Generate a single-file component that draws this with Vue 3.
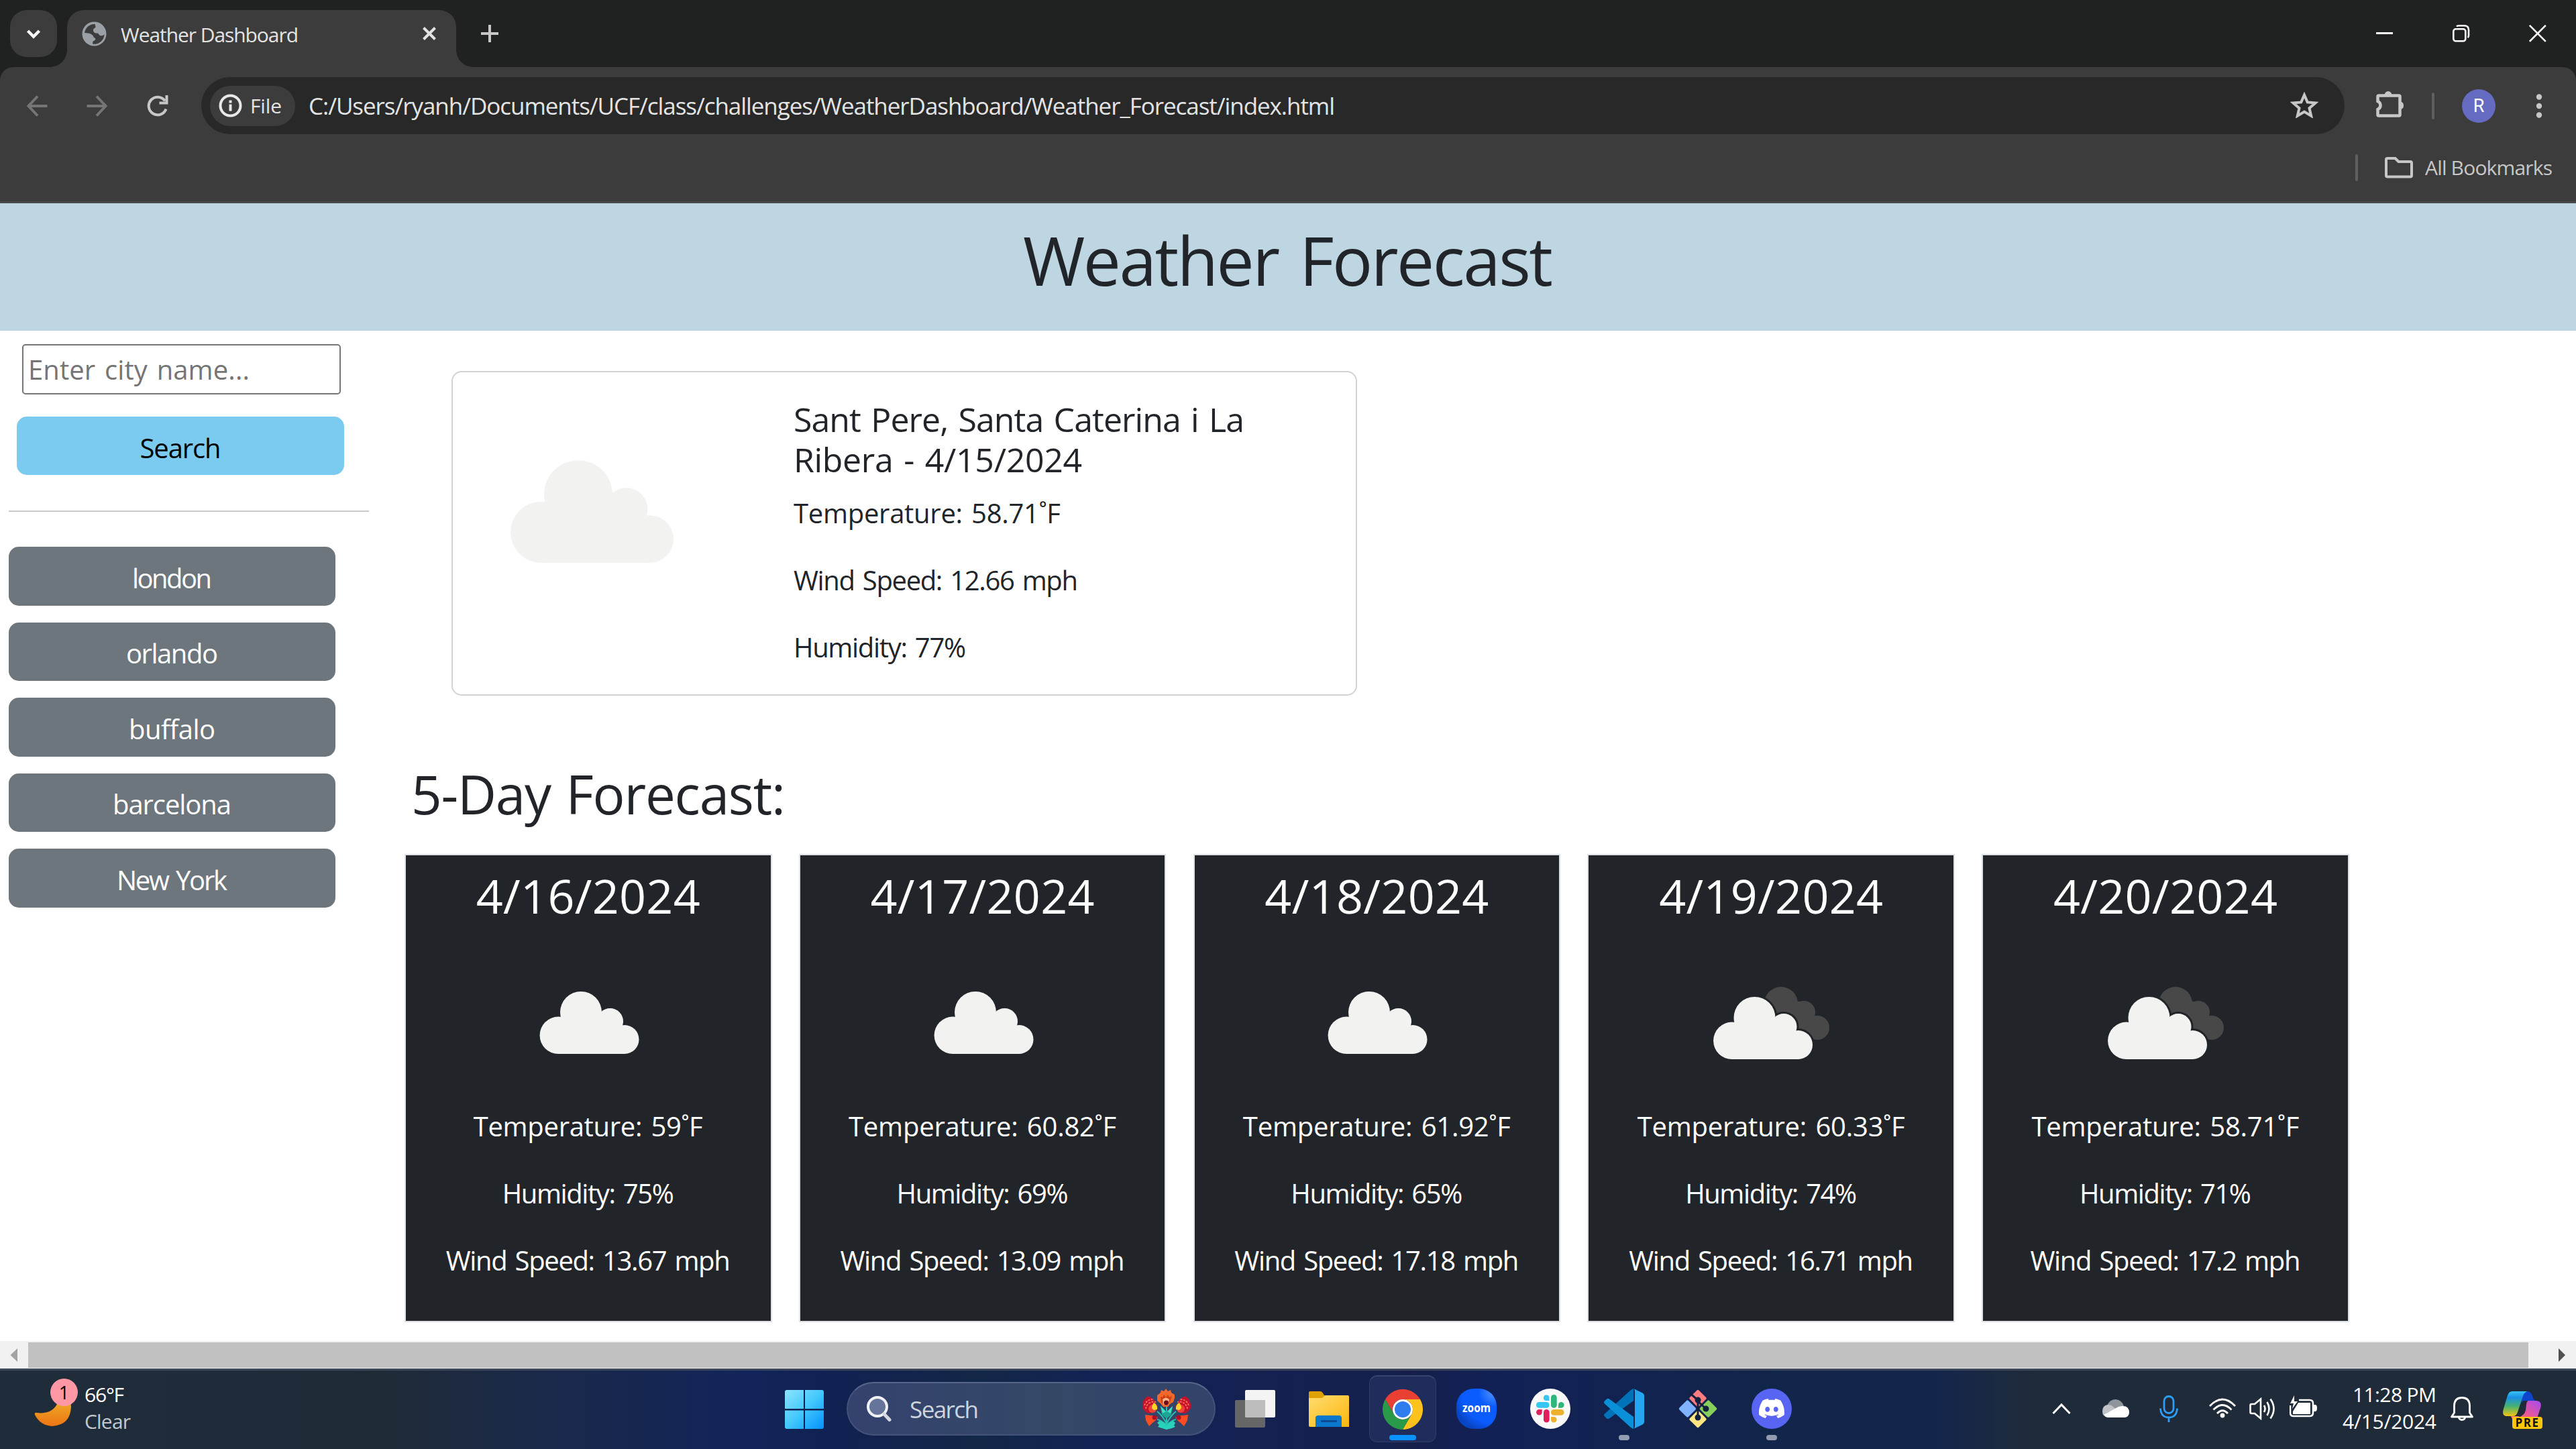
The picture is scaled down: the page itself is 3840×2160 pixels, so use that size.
<script setup>
const cities = [
  { name: 'london', w: 119 },
  { name: 'orlando', w: 137 },
  { name: 'buffalo', w: 129 },
  { name: 'barcelona', w: 177 },
  { name: 'New York', w: 165 },
]

const days = [
  { date: '4/16/2024', temp: 'Temperature: 59˚F', tw: 342, hum: 'Humidity: 75%', wind: 'Wind Speed: 13.67 mph', ww: 424 },
  { date: '4/17/2024', temp: 'Temperature: 60.82˚F', tw: 399, hum: 'Humidity: 69%', wind: 'Wind Speed: 13.09 mph', ww: 424 },
  { date: '4/18/2024', temp: 'Temperature: 61.92˚F', tw: 399, hum: 'Humidity: 65%', wind: 'Wind Speed: 17.18 mph', ww: 424 },
  { date: '4/19/2024', temp: 'Temperature: 60.33˚F', tw: 399, hum: 'Humidity: 74%', wind: 'Wind Speed: 16.71 mph', ww: 424, broken: true },
  { date: '4/20/2024', temp: 'Temperature: 58.71˚F', tw: 399, hum: 'Humidity: 71%', wind: 'Wind Speed: 17.2 mph', ww: 403, broken: true },
]

// Tracks a line of text so that it spans the given width in pixels.
const vFit = {
  mounted(el, { value }) {
    const gaps = el.textContent.trim().length - 1
    const spacing = (value - el.getBoundingClientRect().width) / gaps
    el.style.letterSpacing = `${spacing}px`
    el.style.marginRight = `${-spacing}px`
  },
}
</script>

<template>
  <div class="screen">
    <!-- Browser chrome -->
    <div class="tabstrip">
      <div class="tab-search">
        <svg width="70" height="70" viewBox="0 0 70 70"><path d="M26.500 31l8.500 8.500 8.500-8.500" fill="none" stroke="#fff" stroke-width="4.500" /></svg>
      </div>
      <div class="tab">
        <svg class="globe" width="37" height="37" viewBox="0 0 37 37">
          <circle cx="18.500" cy="18.500" r="18" fill="#9aa0a6" />
          <path d="M20 4C12 3 5 9 4 17c5 0 9 .5 12 3.500 1.500 1.500 1 3 3 4 2.500 1 1 4-1.500 4.500-1.500.3-1 2.500-1.500 4.500 9 1.500 17-5 17.500-14-3 2-5 2.500-7 1-2-1.700-1.500-3-4-3-4 0-5.500-2-5.500-5 0-2.500 3-2 3.500-4.500.3-1.500-1.500-2-.5-4z" fill="#3c3c3c" />
        </svg>
        <span v-fit="265" class="t tab-title">Weather Dashboard</span>
        <svg class="tab-x" width="20" height="20" viewBox="0 0 20 20"><path d="M1.500 1.500l17 17M18.500 1.500l-17 17" stroke="#e3e3e3" stroke-width="4" /></svg>
      </div>
      <svg class="plus" width="26" height="26" viewBox="0 0 26 26"><path d="M13 0v26M0 13h26" stroke="#c7c7c7" stroke-width="4" /></svg>
      <div class="winctl">
        <svg width="26" height="26" viewBox="0 0 26 26"><path d="M0 12.500h25" stroke="#fff" stroke-width="3" /></svg>
        <svg width="26" height="26" viewBox="0 0 26 26" fill="none" stroke="#fff" stroke-width="2.600"><rect x="1.300" y="6.300" width="18" height="18" rx="3.500" /><path d="M6 2.500q1-1.200 3-1.200h8.500q6.500 0 6.500 6.500V16q0 2-1.500 3" /></svg>
        <svg width="26" height="26" viewBox="0 0 26 26"><path d="M.8.800l24 24M24.800.800l-24 24" stroke="#fff" stroke-width="2.600" /></svg>
      </div>
    </div>

    <div class="toolbar">
      <div class="navrow">
        <svg class="back" width="31" height="32" viewBox="0 0 31 32" fill="none" stroke="#757575" stroke-width="4"><path d="M30.500 16H3M16 1.500L2.500 16 16 30.500" /></svg>
        <svg class="fwd" width="31" height="32" viewBox="0 0 31 32" fill="none" stroke="#757575" stroke-width="4"><path d="M.5 16H28M15 1.500L28.500 16 15 30.500" /></svg>
        <svg class="reload" width="32" height="32" viewBox="0 0 32 32" fill="none" stroke="#c7c7c7" stroke-width="4"><path d="M28.500 20.500A13.300 13.300 0 1 1 27 8.500" /><path d="M29.500 0v11.500H18.500" /></svg>
        <div class="omnibox">
          <div class="chip">
            <svg width="35" height="35" viewBox="0 0 35 35"><circle cx="17.500" cy="17.500" r="15" fill="none" stroke="#e8e8e8" stroke-width="4" /><path d="M17.500 15.500v10M17.500 9.500v4" stroke="#e8e8e8" stroke-width="4" /></svg>
            <span v-fit="47" class="t chip-text">File</span>
          </div>
          <span v-fit="1530" class="t url">C:/Users/ryanh/Documents/UCF/class/challenges/WeatherDashboard/Weather_Forecast/index.html</span>
          <svg class="star" width="42" height="40" viewBox="0 0 42 40"><path d="M21 5.500l4.700 10.900 11.800 1-9 7.800 2.700 11.500L21 30.500l-10.200 6.200 2.700-11.500-9-7.800 11.800-1z" fill="none" stroke="#c7c7c7" stroke-width="4" /></svg>
        </div>
        <svg class="puzzle" width="43" height="42" viewBox="0 0 43 42"><path d="M5 8.500h29a1.500 1.500 0 0 1 1.500 1.500v27a1.500 1.500 0 0 1-1.500 1.500H4A1.500 1.500 0 0 1 2.500 37v-8a6.500 6.500 0 0 0 0-12V10A1.500 1.500 0 0 1 4 8.500z" fill="none" stroke="#c7c7c7" stroke-width="4.500" /><path d="M12.500 8a5.500 6 0 0 1 11 0zM36 17.500a5.800 5.800 0 0 1 0 11.500z" fill="#c7c7c7" /></svg>
        <div class="sep" />
        <div class="avatar">R</div>
        <svg class="kebab" width="10" height="44" viewBox="0 0 10 44" fill="#c7c7c7"><circle cx="5" cy="8.500" r="4.200" /><circle cx="5" cy="22" r="4.200" /><circle cx="5" cy="35.500" r="4.200" /></svg>
      </div>
      <div class="bookmarks">
        <div class="sep" />
        <svg width="42" height="32" viewBox="0 0 42 32"><path d="M4 2h11.500l5 5H38q2 0 2 2v18.500q0 2-2 2H4q-2 0-2-2V4q0-2 2-2z" fill="none" stroke="#c7c7c7" stroke-width="4" /></svg>
        <span v-fit="190" class="t">All Bookmarks</span>
      </div>
    </div>

    <!-- Weather page -->
    <header><h1 v-fit="790">Weather Forecast</h1></header>
    <div class="page">
      <aside>
        <div class="field"><span v-fit="330">Enter city name...</span></div>
        <button class="search-btn"><span v-fit="121">Search</span></button>
        <div class="rule" />
        <div class="history">
          <button v-for="c in cities" :key="c.name"><span v-fit="c.w">{{ c.name }}</span></button>
        </div>
      </aside>
      <main>
        <section class="current">
          <svg width="243" height="153" viewBox="0 0 148 93" fill="#f2f2f1">
            <circle cx="61.500" cy="31" r="31" /><circle cx="27.800" cy="65.300" r="27.700" /><circle cx="105" cy="44.500" r="19.500" /><circle cx="126.500" cy="71.500" r="21.500" /><path d="M28 60l2-22h74l14 16 9 39H28z" />
          </svg>
          <div class="facts">
            <h5><span v-fit="672">Sant Pere, Santa Caterina i La</span><span v-fit="430">Ribera - 4/15/2024</span></h5>
            <p><span v-fit="398">Temperature: 58.71˚F</span></p>
            <p><span v-fit="424">Wind Speed: 12.66 mph</span></p>
            <p><span v-fit="257">Humidity: 77%</span></p>
          </div>
        </section>
        <h2><span v-fit="558">5-Day Forecast:</span></h2>
        <section class="days">
          <article v-for="d in days" :key="d.date">
            <h3><span v-fit="334">{{ d.date }}</span></h3>
            <svg width="250" height="270" viewBox="0 0 250 270">
              <g v-if="d.broken" fill="#484849">
                <circle cx="140" cy="119" r="25" /><circle cx="174" cy="132" r="17" /><circle cx="194" cy="155" r="18" /><path d="M134 110l45 8 12 54h-40z" />
              </g>
              <g v-if="d.broken" transform="translate(39 109)" fill="#212529" stroke="#212529" stroke-width="6">
                <circle cx="61.500" cy="31" r="31" /><circle cx="105" cy="44.500" r="19.500" /><circle cx="126.500" cy="71.500" r="21.500" />
              </g>
              <g :transform="d.broken ? 'translate(39 109)' : 'translate(52.500 101)'" fill="#f2f2f1">
                <circle cx="61.500" cy="31" r="31" /><circle cx="27.800" cy="65.300" r="27.700" /><circle cx="105" cy="44.500" r="19.500" /><circle cx="126.500" cy="71.500" r="21.500" /><path d="M28 60l2-22h74l14 16 9 39H28z" />
              </g>
            </svg>
            <p><span v-fit="d.tw">{{ d.temp }}</span></p>
            <p><span v-fit="256">{{ d.hum }}</span></p>
            <p><span v-fit="d.ww">{{ d.wind }}</span></p>
          </article>
        </section>
      </main>
    </div>
    <div class="scrollbar">
      <svg width="42" height="41" viewBox="0 0 42 41"><path d="M26 11v20L15.500 21z" fill="#a3a3a3" /></svg>
      <div class="thumb" />
      <svg width="71" height="41" viewBox="0 0 71 41"><path d="M45 11v20l10-10z" fill="#505050" /></svg>
    </div>

    <!-- Windows taskbar -->
    <div class="taskbar">
      <div class="widget">
        <svg width="70" height="60" viewBox="0 0 70 60">
          <defs><linearGradient id="moon" x1="0" y1="0" x2="0" y2="1"><stop offset="0" stop-color="#eec22f" /><stop offset="1" stop-color="#ee7414" /></linearGradient></defs>
          <path d="M35 6Q54 12 55 30Q54 57 27 59Q9 58 1 42Q0 38 4 39Q28 42 36 22Z" fill="url(#moon)" />
        </svg>
        <div class="badge">1</div>
        <div class="wtext"><span v-fit="59">66°F</span><span v-fit="69" class="dim">Clear</span></div>
      </div>

      <div class="apps">
        <svg class="start" width="58" height="58" viewBox="0 0 58 58">
          <defs><linearGradient id="win" x1="0" y1="0" x2="1" y2="1"><stop offset="0" stop-color="#8ce4fb" /><stop offset=".5" stop-color="#43c8fd" /><stop offset="1" stop-color="#0491fe" /></linearGradient></defs>
          <path d="M3 0h25v28H0V3q0-3 3-3zM30 0h25q3 0 3 3v25H30zM0 30.500h28V58H3q-3 0-3-3zM30 30.500h28V55q0 3-3 3H30z" fill="url(#win)" />
        </svg>
        <div class="searchbox">
          <svg width="38" height="39" viewBox="0 0 38 39"><circle cx="16" cy="16" r="14" fill="#66739a" stroke="#f0f1f4" stroke-width="4" /><path d="M26 27l8 8.500" stroke="#d5d9df" stroke-width="5" stroke-linecap="round" /></svg>
          <span v-fit="103">Search</span>
          <svg class="flower" width="72" height="63" viewBox="0 0 72 63">
            <path d="M22 11l5-4 1-4 4 2 3-4 3 4 4-2 1 4 5 3 0 5-2 6-5 3-3 4H31l-4-5-5-4z" fill="#f0682c" />
            <path d="M27 13l3 1 2-4 3 4 3-4 2 4 4-2-3 9-4 4h-5l-4-4z" fill="#cf3e0c" />
            <path d="M30 17q5-5 10 0l-1 8h-8z" fill="#ffb28b" /><circle cx="35.500" cy="22" r="3.500" fill="#6d0b18" />
            <path d="M11 13l4 3 3 3 2 5 3 3-3 7-6 3-6 1-4-3-4-5 0-6 2-6 4-5z" fill="#c3122e" />
            <path d="M61 13l-4 3-3 3-2 5-3 3 3 7 6 3 6 1 4-3 4-5 0-6-2-6-4-5z" fill="#c3122e" />
            <path d="M5 31a12 12 0 0 1 15-10M3 26a13 13 0 0 1 14-9M67 31a12 12 0 0 0-15-10M69 26a13 13 0 0 0-14-9" stroke="#fb684e" stroke-width="2" stroke-dasharray="3 1.500" fill="none" />
            <circle cx="15" cy="31" r="6" fill="#ef4435" /><circle cx="57" cy="31" r="6" fill="#ef4435" />
            <path d="M17 22q6 3 5 10l-5 1q-6-3 0-11zM55 22q-6 3-5 10l5 1q6-3 0-11z" fill="#fdd32a" />
            <path d="M4 40l8 1 6 0 5 3-4 5-4 3-5 5-3-5-2-4zM68 40l-8 1-6 0-5 3 4 5 4 3 5 5 3-5 2-4z" fill="#fc4c24" />
            <circle cx="18" cy="44" r="3.500" fill="#a8102b" /><circle cx="54" cy="44" r="3.500" fill="#a8102b" />
            <path d="M36 28v34M36 54Q31 42 22 35M36 54q5-12 14-19M35 55Q28 48 22 47M37 55q7-7 13-8" stroke="#25c3b1" stroke-width="2" fill="none" />
            <path d="M27 27l9 9 9-9-2 13-7 6-7-6z" fill="#1aa692" /><path d="M27 27l8 8-5 3zM45 27l-8 8 5 3z" fill="#41e0c7" />
            <path d="M36 62l-7-2-6-2 2-3-3-3 3-3 8 3 3 5 3-5 7-3 3 3-2 4 2 2-5 2z" fill="#28d2ba" />
          </svg>
        </div>
        <svg class="icon task" width="60" height="60" viewBox="0 0 60 60">
          <rect x="0" y="17" width="45" height="41" rx="2" fill="#666" /><rect x="15" y="2" width="45" height="41" rx="2" fill="#f4f4f4" /><path d="M15 17h30v26H17q-2 0-2-2z" fill="#bdbdbd" />
        </svg>
        <svg class="icon" width="60" height="60" viewBox="0 0 60 60">
          <defs><linearGradient id="fold" x1="0" y1="0" x2="1" y2="1"><stop offset="0" stop-color="#ffdc70" /><stop offset="1" stop-color="#fdb70e" /></linearGradient></defs>
          <path d="M0 6q0-2 2-2h15q2 0 3.500 2l4 6-4 4H0z" fill="#dfa104" /><path d="M0 14h20l4-4h34q2 0 2 2v45H2q-2 0-2-2z" fill="url(#fold)" /><path d="M10 57V44q0-4 4-4h31q4 0 4 4v13z" fill="#0b78cd" /><rect x="18" y="47" width="24" height="3" rx="1" fill="#084b93" />
        </svg>
        <div class="icon active">
          <svg width="60" height="60" viewBox="0 0 60 60">
            <path d="M30 15H56A30 30 0 0 0 4 15L17 37.500A15 15 0 0 1 30 15z" fill="#ea4033" /><path d="M30 15h26a30 30 0 0 1-26 45l13-22.500A15 15 0 0 0 30 15z" fill="#fdc21c" /><path d="M4 15a30 30 0 0 0 26 45l13-22.500a15 15 0 0 1-26 0z" fill="#299a48" /><circle cx="30" cy="30" r="15" fill="#fff" /><circle cx="30" cy="30" r="12" fill="#2f7cee" />
          </svg>
        </div>
        <svg class="icon" width="60" height="60" viewBox="0 0 60 60">
          <defs><radialGradient id="zm" cx=".9" cy=".1" r="1"><stop offset="0" stop-color="#4a90ff" /><stop offset=".35" stop-color="#0b5cff" /><stop offset=".75" stop-color="#0b5cff" /><stop offset="1" stop-color="#0845c4" /></radialGradient></defs>
          <rect width="60" height="60" rx="26" fill="url(#zm)" /><text x="30" y="35" text-anchor="middle" textLength="42" lengthAdjust="spacingAndGlyphs" class="zoom">zoom</text>
        </svg>
        <svg class="icon" width="60" height="60" viewBox="0 0 60 60">
          <circle cx="30" cy="30" r="30" fill="#f8f8f8" />
          <g fill="#36c5f0"><path d="M28.500 18h-4.300a4.300 4.300 0 1 1 4.300-4.500z" /><rect x="9" y="20" width="19.500" height="8.700" rx="4.300" /></g>
          <g fill="#2eb67d"><rect x="31" y="9" width="8.700" height="19.700" rx="4.300" /><path d="M42 28.700v-4.300a4.300 4.300 0 1 1 4.300 4.300z" /></g>
          <g fill="#ecb22e"><rect x="31" y="31" width="19.500" height="8.700" rx="4.300" /><path d="M31 42h4.300a4.300 4.300 0 1 1-4.300 4.300z" /></g>
          <g fill="#e01e5a"><rect x="20" y="31" width="8.700" height="19.500" rx="4.300" /><path d="M17.700 31v4.300a4.300 4.300 0 1 1-4.300-4.300z" /></g>
        </svg>
        <div class="icon running">
          <svg width="60" height="60" viewBox="0 0 60 60">
            <path d="M44 0v18L8 44.500q-2 1.500-4 0l-3-3q-2-2 0-4L40 2z" fill="#0072b8" /><path d="M44 60V42L8 15.500q-2-1.500-4 0l-3 3q-2 2 0 4L40 58z" fill="#0a90d9" /><path d="M44 0l13.500 6.500Q60 8 60 10.500v39q0 2.500-2.500 4L44 60q2-1 2-4V4q0-3-2-4z" fill="#24a6f1" />
          </svg>
        </div>
        <svg class="icon" width="60" height="60" viewBox="0 0 60 60">
          <g transform="rotate(45 30 30)"><rect x="9.500" y="9.500" width="19" height="19" rx="2" fill="#fc7c80" /><rect x="31.500" y="9.500" width="19" height="19" rx="2" fill="#86cf5a" /><rect x="9.500" y="31.500" width="19" height="19" rx="2" fill="#80b3ff" /><rect x="31.500" y="31.500" width="19" height="19" rx="2" fill="#ffe680" /></g>
          <path d="M17 6l13 11v26M30 19l12 11" fill="none" stroke="#12203f" stroke-width="3" /><circle cx="30" cy="17" r="4.500" fill="#12203f" /><circle cx="42" cy="30" r="4.500" fill="#12203f" /><circle cx="30" cy="43" r="4.500" fill="#12203f" />
        </svg>
        <div class="icon running">
          <svg width="60" height="60" viewBox="0 0 60 60"><circle cx="30" cy="30" r="30" fill="#5865f2" /><path transform="translate(11 10.500) scale(1.583)" fill="#fff" d="M20.317 4.370a19.790 19.790 0 00-4.885-1.515.074.074 0 00-.079.037c-.211.375-.445.865-.608 1.250-1.845-.276-3.680-.276-5.487 0-.164-.393-.406-.874-.618-1.250a.077.077 0 00-.079-.037 19.736 19.736 0 00-4.885 1.515.070.070 0 00-.032.028C.533 9.046-.319 13.580.099 18.058a.082.082 0 00.031.056c2.053 1.508 4.041 2.423 5.993 3.029a.078.078 0 00.084-.028c.462-.630.873-1.295 1.226-1.994a.076.076 0 00-.042-.106c-.653-.248-1.274-.550-1.872-.892a.077.077 0 01-.008-.128c.126-.094.252-.192.372-.291a.074.074 0 01.078-.011c3.928 1.793 8.180 1.793 12.061 0a.074.074 0 01.079.010c.120.099.246.198.373.292a.077.077 0 01-.007.128 12.299 12.299 0 01-1.873.891.077.077 0 00-.041.107c.360.698.772 1.363 1.225 1.993a.076.076 0 00.084.029c1.961-.607 3.950-1.522 6.002-3.029a.077.077 0 00.031-.055c.500-5.177-.838-9.674-3.549-13.660a.061.061 0 00-.031-.029zM8.020 15.331c-1.183 0-2.157-1.086-2.157-2.419s.956-2.419 2.157-2.419c1.211 0 2.176 1.095 2.157 2.419 0 1.333-.956 2.419-2.157 2.419zm7.975 0c-1.183 0-2.157-1.086-2.157-2.419s.955-2.419 2.157-2.419c1.211 0 2.176 1.095 2.157 2.419 0 1.333-.946 2.419-2.157 2.419z" /></svg>
        </div>
      </div>

      <div class="tray">
        <svg width="28" height="18" viewBox="0 0 28 18"><path d="M1.500 16L14 3l12.500 13" fill="none" stroke="#fff" stroke-width="3" /></svg>
        <svg class="onedrive" width="41" height="27" viewBox="0 0 41 27"><path d="M8 9Q12 0 21 0q9 1 12 10l-12 9z" fill="#8f959c" /><path d="M1 18Q1 9 9 8q6-.5 11 6l3 3L3 24q-2-2-2-6z" fill="#bfc3c8" /><path d="M3 23l22-12q16-4 16 9-1 7-7 7H10q-5 0-7-4z" fill="#fff" /></svg>
        <svg class="mic" width="28" height="40" viewBox="0 0 28 40" fill="none" stroke="#2f9df4" stroke-width="2.800"><rect x="7" y="1.500" width="14" height="25" rx="7" /><path d="M1.500 19.500q1 13.500 12.500 13.500t12.500-13.500M14 33v7" /></svg>
        <svg class="wifi" width="40" height="30" viewBox="0 0 40 30" fill="none" stroke="#fff" stroke-width="2.800"><path d="M1 12q19-20 38 0M6.500 17.500q13.500-14 27 0M12 23q8-8.500 16 0" /><circle cx="20" cy="26" r="2" fill="#fff" /></svg>
        <svg class="speaker" width="41" height="34" viewBox="0 0 41 34" fill="none" stroke="#fff" stroke-width="2.600"><path d="M1.500 12q0-2 2-2H8l9-7.500v29L8 24H3.500q-2 0-2-2zM22 12q3 5 0 10M26.500 7q6 10 0 20M31.500 2.500q10 14.500 0 29" /></svg>
        <svg class="battery" width="41" height="34" viewBox="0 0 41 34"><path d="M14 7h16q5 0 5 5v14q0 5-5 5H6q-5 0-5-5V15" fill="none" stroke="#fff" stroke-width="2.600" /><path d="M13 11h18v17H5v-4z" fill="#fff" /><path d="M36 14h3q2 1 2 5t-2 5h-3z" fill="#fff" /><path d="M7 0L1 12h5L4 20l8-11H7z" fill="#fff" /></svg>
        <div class="clock"><span v-fit="125">11:28 PM</span><span v-fit="140">4/15/2024</span></div>
        <svg class="bell" width="34" height="36" viewBox="0 0 34 36" fill="none" stroke="#fff" stroke-width="2.800"><path d="M5.500 24V13Q6 1.500 17 1.500T28.500 13v11l4 6h-31z" stroke-linejoin="round" /><path d="M12 30q1 4.500 5 4.500t5-4.500" /></svg>
        <div class="copilot">
          <svg width="60" height="44" viewBox="0 0 60 44">
            <defs>
              <linearGradient id="ca" x1="0" y1="0" x2="0" y2="1"><stop offset="0" stop-color="#36c3f6" /><stop offset=".25" stop-color="#1a90e6" /><stop offset=".6" stop-color="#45b172" /><stop offset="1" stop-color="#f5c60f" /></linearGradient>
              <linearGradient id="cb" x1="1" y1="0" x2="0" y2="1"><stop offset="0" stop-color="#a34bf2" /><stop offset=".6" stop-color="#ef5792" /><stop offset="1" stop-color="#ff8a58" /></linearGradient>
            </defs>
            <path d="M30 0h6q6 0 8 7t5 7H32q-4 0-5 6z" fill="#0f45cc" /><path d="M38 14h12q9 1 6 11l-5 15q-2 4-8 4H20q-6 0-8-7h14q6-1 8-9l1-9q1-5 3-5z" fill="url(#cb)" /><path d="M31 14h6q-2 2-3 6l-5 14q-1 4-4 4l-4-2z" fill="#1f2b3a" /><path d="M14 0h22q-5 2-7 10l-7 21q-2 6-7 6H5q-7-1-4-11L7 6q2-6 7-6z" fill="url(#ca)" />
          </svg>
          <div class="pre">PRE</div>
        </div>
      </div>
    </div>
  </div>
</template>

<style>
body { margin: 0; overflow: hidden; }
</style>

<style scoped>
* { box-sizing: border-box; }
svg { display: block; flex: none; }
span, h1 { display: inline-block; white-space: nowrap; }
h1, h2, h3, h5, p { margin: 0; font-weight: inherit; }
.screen { width: 3840px; height: 2160px; overflow: hidden; background: linear-gradient(#202221 150px, #fff 150px); font-family: "Open Sans", "Noto Sans", sans-serif; color: #212529; }
.t { color: #e3e3e3; font-size: 30px; line-height: 40px; }

.tabstrip { height: 100px; display: flex; padding-left: 15px; }
.tab-search { width: 70px; height: 70px; margin-top: 15px; border-radius: 25px; background: #3c3c3c; }
.tab { position: relative; width: 580px; height: 85px; margin: 15px 0 0 15px; border-radius: 25px 25px 0 0; background: #3c3c3c; display: flex; padding-left: 22px; }
.tab::before, .tab::after { content: ""; position: absolute; bottom: 0; width: 25px; height: 25px; }
.tab::before { left: -25px; background: radial-gradient(circle at 0 0, transparent 24.500px, #3c3c3c 25px); }
.tab::after { right: -25px; background: radial-gradient(circle at 100% 0, transparent 24.500px, #3c3c3c 25px); }
.globe { margin-top: 17px; }
.tab-title { margin: 17px 0 0 21px; }
.tab-x { margin: 25px 30px 0 auto; }
.plus { margin: 37px 0 0 37px; }
.winctl { display: flex; gap: 88px; margin: 37px 44px 0 auto; }

.toolbar { height: 203px; background: #3c3c3c; border-bottom: 3px solid #474747; border-radius: 20px 20px 0 0; }
.navrow { display: flex; align-items: center; height: 115px; }
.back { margin-left: 40px; }
.fwd { margin-left: 58px; }
.reload { margin-left: 59px; }
.omnibox { width: 3195px; height: 85px; margin-left: 49px; border-radius: 43px; background: #282828; display: flex; align-items: center; padding-left: 13px; }
.chip { width: 127px; height: 60px; border-radius: 30px; background: #3c3c3c; display: flex; align-items: center; padding-left: 13px; }
.chip-text { margin-left: 12px; font-weight: 500; }
.url { margin-left: 20px; font-size: 35px; line-height: 46px; }
.star { margin: -3px 39px 0 auto; }
.puzzle { margin: -6px 0 0 47px; }
.sep { width: 4px; height: 40px; border-radius: 2px; background: #5f5f5f; }
.navrow .sep { margin-left: 40px; }
.avatar { width: 50px; height: 50px; margin-left: 41px; border-radius: 50%; background: #656bc0; color: #fff; font: 27px/50px Roboto, sans-serif; text-align: center; }
.kebab { margin-left: 60px; }
.bookmarks { display: flex; align-items: center; justify-content: flex-end; height: 70px; padding-right: 35px; }
.bookmarks svg { margin: 0 18px 0 40px; }
.bookmarks .t { color: #c7c7c7; }

header { height: 190px; background: #bed6e2; padding-top: 24px; text-align: center; font-weight: 450; }
h1 { font-size: 100px; line-height: 120px; word-spacing: .08em; }
.page { height: 1506px; background: #fff; display: flex; font-size: 40px; line-height: 60px; font-weight: 450; word-spacing: .08em; }
aside { width: 600px; padding: 20px 0 0 13px; flex: none; }
.field { width: 475px; height: 75px; margin-left: 20px; border: 2px solid #767676; border-radius: 5px; padding: 6px 0 0 7px; color: #757575; }
button { display: block; border: 0; border-radius: 15px; padding: 6px 0 0; font: 450 40px/60px "Open Sans", sans-serif; word-spacing: .08em; text-align: center; }
.search-btn { width: 488px; height: 87px; margin: 33px 0 0 12px; background: #7bcaf0; color: #000; }
.rule { width: 537px; height: 2px; margin-top: 53px; background: #c8c9ca; }
.history { margin-top: 52px; display: flex; flex-direction: column; gap: 25px; }
.history button { width: 487px; height: 87.500px; background: #6d757d; color: #fff; }
main { flex: 1; padding-top: 60px; }
.current { width: 1350px; height: 484px; margin-left: 73px; border: 2px solid #d1d2d3; border-radius: 15px; display: flex; }
.current svg { margin: 131px 0 0 86px; }
.facts { margin: 40px 0 0 179px; }
h5 { display: flex; flex-direction: column; align-items: flex-start; font-size: 50px; line-height: 60px; margin-bottom: 20px; }
.facts p { margin-bottom: 40px; }
h2 { font-size: 80px; line-height: 96px; margin: 98px 0 0 13px; }
.days { display: flex; gap: 40.300px; margin: 42px 0 0 3px; }
article { width: 547.500px; height: 698px; border: 2px solid #dee2e6; background: #212529; color: #fff; display: flex; flex-direction: column; align-items: center; padding-top: 18px; }
h3 { font-size: 70px; line-height: 84px; }
article svg { margin-bottom: 2px; }
article p { margin-bottom: 40px; }
.scrollbar { height: 41px; background: #f1f1f1; display: flex; }
.thumb { flex: 1; height: 38px; margin-top: 2px; background: #c1c1c1; }

.taskbar { height: 120px; border-top: 3px solid #3e4858; display: flex; color: #fff; font-size: 30px; background: linear-gradient(90deg, #1f2c39 0, #202b38 15%, #1b2947 20%, #12245a 29%, #112153 32%, #132747 38%, #122356 43%, #161f4c 55%, #112156 58%, #12254a 69%, #14254c 75%, #1f2b3a 79%, #1f2b38 100%); }
.widget { position: relative; width: 1170px; display: flex; padding: 24px 0 0 51px; }
.badge { position: absolute; left: 75px; top: 12px; width: 41px; height: 41px; border-radius: 50%; background: #ff98a4; color: #000; font-size: 27px; line-height: 41px; text-align: center; }
.wtext { display: flex; flex-direction: column; align-items: flex-start; margin: -8px 0 0 5px; line-height: 40px; }
.dim { color: #c3c8cd; }
.apps { display: flex; width: 1889px; }
.start { margin-top: 29px; }
.searchbox { width: 550px; height: 80px; margin: 17px 0 0 34px; border-radius: 40px; border: 2px solid #44527a; border-top-color: #57658a; background: linear-gradient(90deg, #34426e, #344866 55%, #33436a); display: flex; align-items: center; padding: 0 35px 0 28px; font-size: 35px; color: #ced4dd; }
.searchbox span { margin-left: 26px; }
.flower { margin-left: auto; }
.icon { width: 60px; height: 60px; margin: 27px 0 0 50px; flex: none; }
.task { margin-left: 29px; }
.active, .running { position: relative; }
.active { width: 100px; height: 100px; margin: 7px -20px 0 30px; padding: 19px; border: 1px solid #303d66; border-top: 2px solid #35436d; border-radius: 12px; background: #202d5c; }
.active::after, .running::after { content: ""; position: absolute; height: 8px; border-radius: 4px; }
.active::after { left: 29px; bottom: 2px; width: 40px; background: #0a93ff; }
.running::after { left: 22px; top: 69px; width: 16px; background: #939bb0; }
.zoom { font: 700 17px "Open Sans", sans-serif; fill: #fff; }
.tray { display: flex; }
.tray > * { align-self: flex-start; }
.tray > svg:first-child { margin-top: 48px; }
.onedrive { margin: 43px 0 0 46px; }
.mic { margin: 37px 0 0 45px; }
.wifi { margin: 41px 0 0 46px; }
.speaker { margin: 40px 0 0 20px; }
.battery { margin: 37px 0 0 19px; }
.clock { width: 178px; display: flex; flex-direction: column; align-items: flex-end; line-height: 40px; margin-top: 16px; }
.bell { margin: 39px 0 0 21px; }
.copilot { position: relative; margin: 31px 0 0 44px; }
.pre { position: absolute; left: 14px; top: 38px; width: 45px; height: 18px; border-radius: 4px; background: #ffc60c; color: #111; font-weight: 700; font-size: 17px; line-height: 18px; letter-spacing: 1.500px; text-align: center; }
</style>
